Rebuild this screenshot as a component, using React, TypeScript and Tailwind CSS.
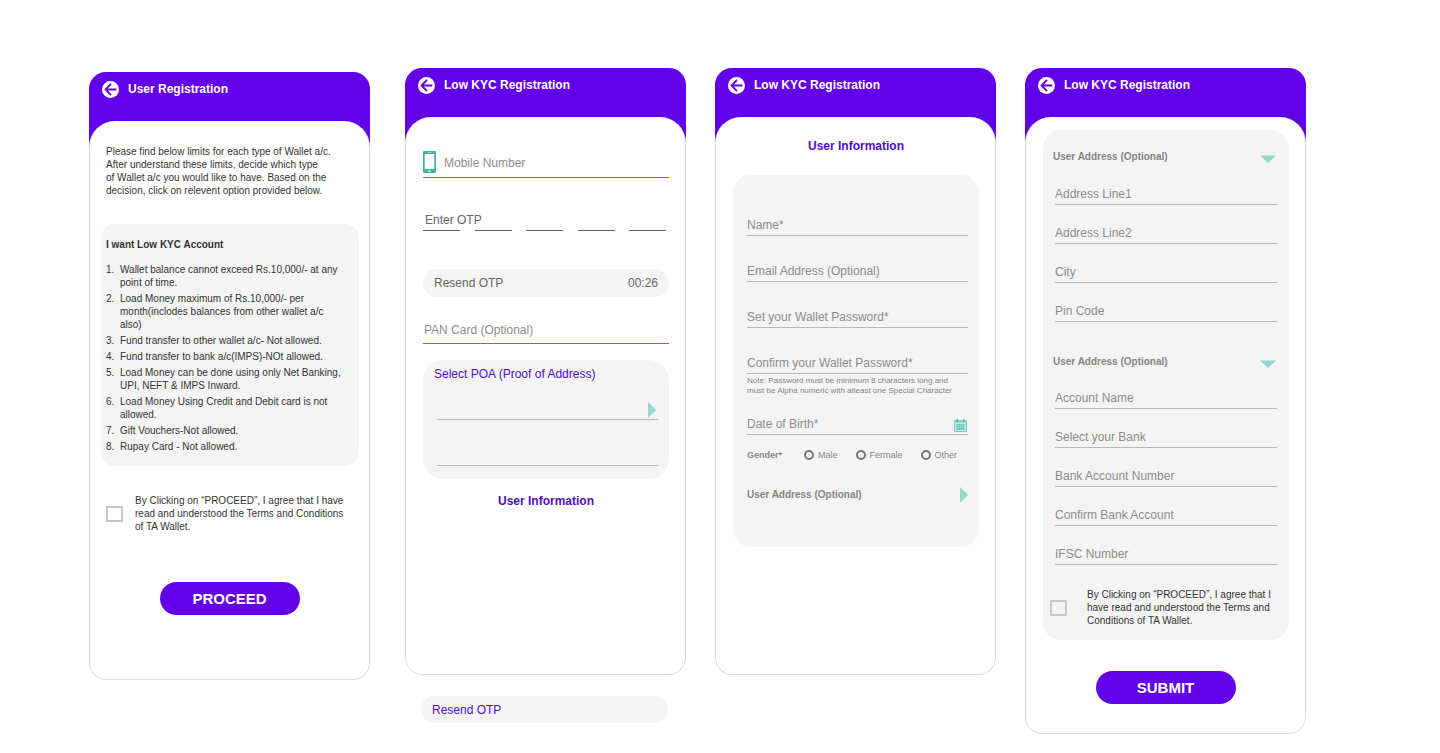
import { clsx } from 'clsx'
import type { ReactNode } from 'react'

const LIMITS = [
	'Wallet balance cannot exceed Rs.10,000/- at any point of time.',
	'Load Money maximum of Rs.10,000/- per month(inclodes balances from other wallet a/c also)',
	'Fund transfer to other wallet a/c- Not allowed.',
	'Fund transfer to bank a/c(IMPS)-NOt allowed.',
	'Load Money can be done using only Net Banking, UPI, NEFT & IMPS Inward.',
	'Load Money Using Credit and Debit card is not allowed.',
	'Gift Vouchers-Not allowed.',
	'Rupay Card - Not allowed.',
]

const ADDRESS_FIELDS = ['Address Line1', 'Address Line2', 'City', 'Pin Code']
const BANK_FIELDS = [
	'Account Name',
	'Select your Bank',
	'Bank Account Number',
	'Confirm Bank Account',
	'IFSC Number',
]

const BackIcon = () => (
	<svg viewBox="0 0 17 17" className="size-[17px]" aria-hidden="true">
		<circle cx="8.5" cy="8.5" r="8.5" fill="#fff" />
		<path
			d="M9 2.9 3.6 8.5 9 14.1M3.8 8.5h10.6"
			fill="none"
			stroke="#6200ea"
			strokeWidth="1.9"
		/>
	</svg>
)

const PhoneIcon = () => (
	<svg viewBox="0 0 13 22" className="w-[13px] h-[22px] shrink-0" aria-hidden="true">
		<rect width="13" height="22" rx="1.2" fill="#3fb59b" />
		<rect x="1.7" y="3" width="9.6" height="15" fill="#fff" />
		<rect x="4.5" y="1.1" width="4" height="0.8" fill="#a5ddd0" />
		<circle cx="6.5" cy="20" r="1.1" fill="#fff" />
	</svg>
)

const CalendarIcon = () => (
	<svg viewBox="0 0 13 13" className="size-[13px]" aria-hidden="true">
		<path d="M.5 1.5h12v11H.5z" fill="#c5ebe2" stroke="#7fd1c0" />
		<path d="M.5 1.5h12v2.4H.5z" fill="#8ed8c9" />
		<path d="M3.2 0v3M9.8 0v3" stroke="#4db8a3" strokeWidth="1.4" />
		<path d="M2.5 5h8v6h-8z" fill="#62c6b2" />
		<path d="M2.5 7h8M2.5 9h8M4.5 5v6M6.5 5v6M8.5 5v6" stroke="#a8e0d4" strokeWidth="0.6" />
	</svg>
)

const ArrowRight = () => (
	<svg viewBox="0 0 8 16" className="w-2 h-4" aria-hidden="true">
		<path d="M0 0l8 8-8 8z" fill="#93d8ca" />
	</svg>
)

const ArrowDown = () => (
	<svg viewBox="0 0 16 12" className="w-4 h-3" aria-hidden="true">
		<path d="M0 4.5h16L8 12z" fill="#93d8ca" />
	</svg>
)

type CardProps = { title: string; className?: string; children: ReactNode }

const Card = ({ title, className, children }: CardProps) => (
	<section>
		<header className="flex items-start gap-[9px] h-[75px] pt-[9px] pl-[13px] rounded-t-[17px] bg-[#6200ea]">
			<button type="button" aria-label="Back">
				<BackIcon />
			</button>
			<h2 className="text-xs leading-4 font-bold text-white">{title}</h2>
		</header>
		<div
			className={clsx(
				'-mt-[26px] border border-t-0 border-[#dcdce2] bg-white rounded-t-[26px] rounded-b-[17px]',
				className,
			)}
		>
			{children}
		</div>
	</section>
)

const Field = ({ label, type = 'text' }: { label: string; type?: string }) => (
	<input
		type={type}
		aria-label={label}
		placeholder={label}
		className="block w-full h-5 pb-px text-xs leading-4 border-b rounded-none outline-none border-[#b9b9b9] text-[#555] placeholder:text-[#8c8c8c]"
	/>
)

const Agreement = ({ className }: { className: string }) => (
	<label className={clsx('flex items-center text-[10px] leading-[13px] text-[#333]', className)}>
		<input
			type="checkbox"
			className="appearance-none shrink-0 w-[17px] h-4 border-2 border-[#c8c8c8] checked:bg-[#6200ea]"
		/>
		<span>By Clicking on “PROCEED”, I agree that I have read and understood the Terms and Conditions of TA Wallet.</span>
	</label>
)

const PrimaryButton = ({ className, children }: { className: string; children: ReactNode }) => (
	<button
		type="button"
		className={clsx(
			'block mx-auto w-[140px] h-[33px] rounded-full bg-[#6200ea] text-[15px] leading-5 font-bold text-white',
			className,
		)}
	>
		{children}
	</button>
)

const SectionToggle = ({ className, icon }: { className?: string; icon: ReactNode }) => (
	<button
		type="button"
		className={clsx(
			'flex items-center justify-between w-full text-[10px] leading-4 font-bold text-[#858585]',
			className,
		)}
	>
		User Address (Optional)
		{icon}
	</button>
)

const LimitsCard = () => (
	<Card title="User Registration" className="pb-16">
		<p className="pt-6 px-4 text-[10px] leading-[13px] text-[#333]">
			Please find below limits for each type of Wallet a/c.
			<br />
			After understand these limits, decide which type
			<br />
			of Wallet a/c you would like to have. Based on the
			<br />
			decision, click on relevent option provided below.
		</p>
		<div className="mt-[27px] ml-[11px] mr-[10px] pl-[5px] pr-4 py-[13px] rounded-[14px] bg-[#f4f4f4] text-[10px] leading-[13px] text-[#333]">
			<h3 className="font-bold leading-4">I want Low KYC Account</h3>
			<ol className="mt-[10px] flex flex-col gap-[3px]">
				{LIMITS.map((limit, i) => (
					<li key={limit} className="flex">
						<span className="w-[14px] shrink-0">{i + 1}.</span>
						<span>{limit}</span>
					</li>
				))}
			</ol>
		</div>
		<Agreement className="mt-7 px-4 gap-3" />
		<PrimaryButton className="mt-[49px]">PROCEED</PrimaryButton>
	</Card>
)

const OtpCard = () => (
	<Card title="Low KYC Registration" className="pt-[34px] pl-[17px] pr-4 pb-[165px]">
		<label className="flex items-start gap-2 h-[27px] border-b border-violet-500">
			<PhoneIcon />
			<input
				type="tel"
				aria-label="Mobile Number"
				placeholder="Mobile Number"
				className="flex-1 h-6 min-w-0 text-xs outline-none text-[#555] placeholder:text-[#8c8c8c]"
			/>
		</label>

		<div className="relative flex justify-between mt-[33px] pr-[3px]">
			<label htmlFor="otp-1" className="absolute left-[2px] top-px text-xs leading-4 text-[#666]">
				Enter OTP
			</label>
			{[1, 2, 3, 4, 5].map((n) => (
				<input
					key={n}
					id={`otp-${n}`}
					aria-label={`OTP digit ${n}`}
					maxLength={1}
					className="h-5 text-xs text-center border-b outline-none w-[37px] border-[#606060]"
				/>
			))}
		</div>

		<button
			type="button"
			className="flex items-center justify-between w-full h-7 mt-[38px] px-[11px] rounded-full bg-[#f4f4f4] text-xs text-[#666]"
		>
			<span>Resend OTP</span>
			<span>00:26</span>
		</button>

		<input
			aria-label="PAN Card (Optional)"
			placeholder="PAN Card (Optional)"
			className="block w-full h-6 mt-[23px] pl-px pb-1 text-xs leading-4 border-b outline-none border-violet-500 text-[#555] placeholder:text-[#8c8c8c]"
		/>

		<div className="mt-4 pt-[6px] pb-[13px] px-[11px] rounded-[20px] bg-[#f4f4f4]">
			<label htmlFor="poa" className="block text-xs leading-4 text-[#4f0ccb]">
				Select POA (Proof of Address)
			</label>
			<div className="relative mt-[18px] ml-[3px]">
				<select
					id="poa"
					className="block w-full h-5 text-xs border-b outline-none appearance-none border-[#b9b9b9]"
				>
					<option value=""></option>
				</select>
				<span className="absolute right-[2px] bottom-[2px]">
					<ArrowRight />
				</span>
			</div>
			<input
				aria-label="Proof of Address number"
				className="block h-5 mt-[26px] ml-[3px] text-xs border-b outline-none w-[calc(100%-3px)] border-[#b9b9b9]"
			/>
		</div>

		<h3 className="mt-[14px] text-xs leading-4 font-bold text-center text-[#4f0ccb]">
			User Information
		</h3>
	</Card>
)

const UserInfoCard = () => (
	<Card title="Low KYC Registration" className="pt-[21px] pl-[17px] pr-4 pb-[127px]">
		<h3 className="text-xs leading-4 font-bold text-center text-[#4f0ccb]">User Information</h3>
		<div className="mt-[21px] pt-[41px] pl-[14px] pr-[11px] pb-11 rounded-[18px] bg-[#f4f4f4] text-[#858585]">
			<div className="flex flex-col gap-[26px]">
				<Field label="Name*" />
				<Field label="Email Address (Optional)" type="email" />
				<Field label="Set your Wallet Password*" type="password" />
				<Field label="Confirm your Wallet Password*" type="password" />
			</div>
			<p className="mt-[2px] text-[8px] leading-[10px]">
				Note: Password must be minimum 8 characters long and
				<br />
				must be Alpha numeric with atleast one Special Character
			</p>
			<div className="relative mt-[19px]">
				<Field label="Date of Birth*" />
				<span className="absolute right-px bottom-[3px]">
					<CalendarIcon />
				</span>
			</div>
			<div className="flex items-center gap-[18px] mt-[14px] text-[9px] leading-3" role="radiogroup" aria-label="Gender">
				<span className="w-[39px] font-bold">Gender*</span>
				{['Male', 'Fermale', 'Other'].map((gender) => (
					<label key={gender} className="flex items-center gap-1">
						<input
							type="radio"
							name="gender"
							className="appearance-none size-[10px] rounded-full border-2 border-[#777] checked:bg-[#777]"
						/>
						{gender}
					</label>
				))}
			</div>
			<SectionToggle className="mt-[26px]" icon={<ArrowRight />} />
		</div>
	</Card>
)

const AddressCard = () => (
	<Card title="Low KYC Registration" className="pt-[13px] pb-[29px]">
		<div className="ml-[17px] mr-4 pt-[19px] pb-[13px] rounded-[18px] bg-[#f4f4f4]">
			<SectionToggle className="pl-[10px] pr-[13px]" icon={<ArrowDown />} />
			<div className="flex flex-col gap-[19px] mt-5 px-3">
				{ADDRESS_FIELDS.map((label) => (
					<Field key={label} label={label} />
				))}
			</div>
			<SectionToggle className="mt-8 pl-[10px] pr-[13px]" icon={<ArrowDown />} />
			<div className="flex flex-col gap-[19px] mt-[19px] px-3">
				{BANK_FIELDS.map((label) => (
					<Field key={label} label={label} />
				))}
			</div>
			<Agreement className="mt-[23px] pl-[7px] pr-2 gap-5" />
		</div>
		<PrimaryButton className="mt-[31px]">SUBMIT</PrimaryButton>
	</Card>
)

export default function App() {
	return (
		<main className="flex items-start gap-[29px] pt-[68px] pl-[89px] pr-[134px] min-h-screen bg-white font-['Liberation_Sans',Arial,sans-serif]">
			<div className="flex-1 pt-1 mr-[6px]">
				<LimitsCard />
			</div>
			<div className="flex-1">
				<OtpCard />
				<button
					type="button"
					className="block h-[27px] mt-[21px] ml-4 px-[11px] rounded-full w-[calc(100%-34px)] bg-[#f4f4f4] text-left text-xs text-[#4f0ccb]"
				>
					Resend OTP
				</button>
			</div>
			<div className="flex-1">
				<UserInfoCard />
			</div>
			<div className="flex-1">
				<AddressCard />
			</div>
		</main>
	)
}
